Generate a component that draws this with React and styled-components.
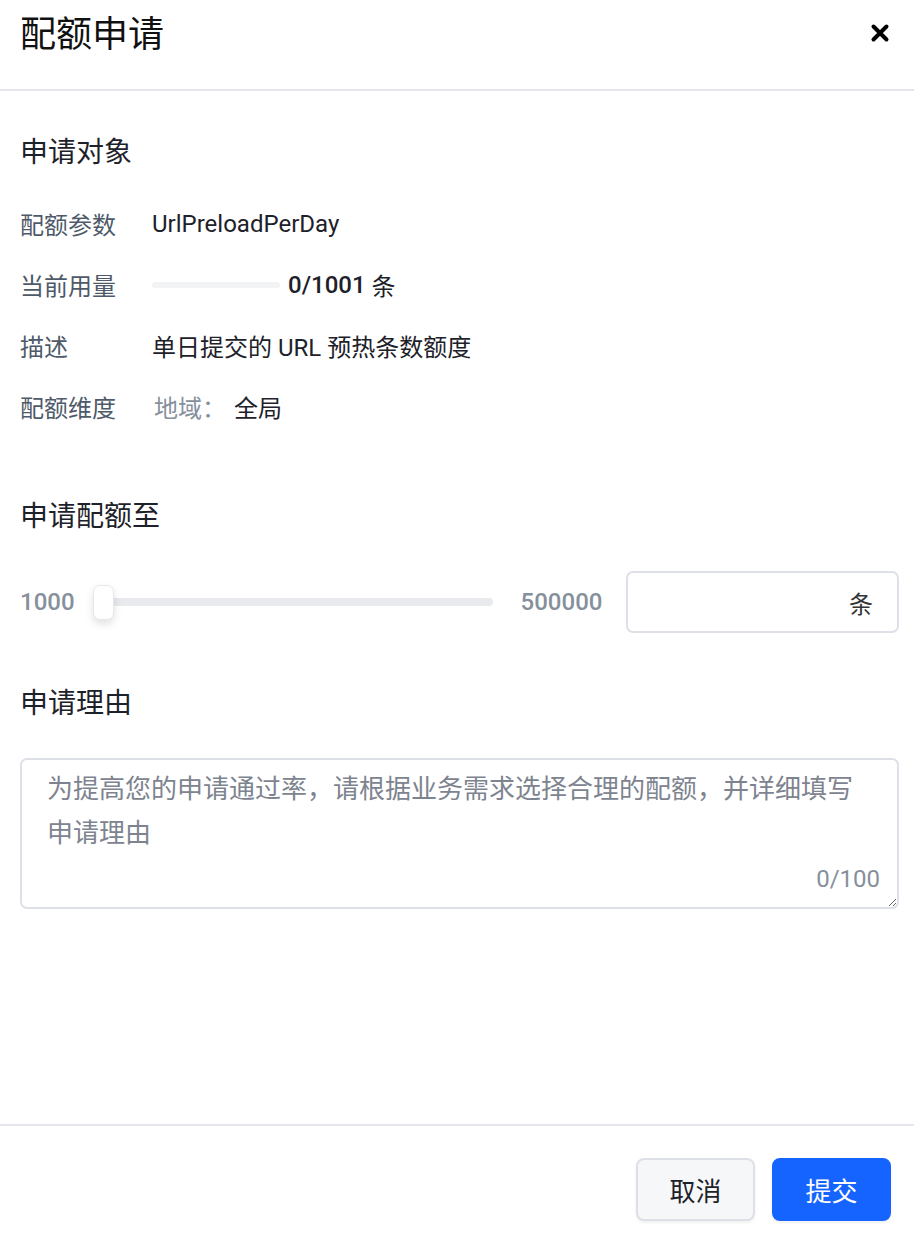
import React from 'react'
import styled, { createGlobalStyle } from 'styled-components'

const GlobalStyle = createGlobalStyle`
  html, body {
    margin: 0;
    padding: 0;
    background: #fff;
  }
  body {
    font-family: Roboto, "Noto Sans CJK SC", sans-serif;
    color: #1d2129;
  }
  * { box-sizing: border-box; }
`

const rows = [
  { label: '配额参数', value: 'UrlPreloadPerDay' },
  { label: '当前用量', usage: true },
  { label: '描述', value: '单日提交的 URL 预热条数额度' },
  { label: '配额维度', dim: { key: '地域：', value: '全局' } },
]

function App() {
  return (
    <Page>
      <GlobalStyle />
      <Header>
        <Title>配额申请</Title>
        <Close aria-label="close">
          <svg width="20" height="20" viewBox="0 0 20 20">
            <path d="M3.5 3.5 L16.5 16.5 M16.5 3.5 L3.5 16.5" stroke="#000" strokeWidth="4" strokeLinecap="round" />
          </svg>
        </Close>
      </Header>

      <Body>
        <SectionTitle $top={42}>申请对象</SectionTitle>
        <InfoList>
          {rows.map((r) => (
            <InfoRow key={r.label}>
              <Label>{r.label}</Label>
              {r.value && <Value>{r.value}</Value>}
              {r.usage && (
                <Value>
                  <UsageBar />
                  <Strong>0/1001</Strong>&nbsp;条
                </Value>
              )}
              {r.dim && (
                <Value>
                  <DimKey>{r.dim.key}</DimKey>
                  {r.dim.value}
                </Value>
              )}
            </InfoRow>
          ))}
        </InfoList>

        <SectionTitle $top={60}>申请配额至</SectionTitle>
        <SliderRow>
          <Bound>1000</Bound>
          <Track>
            <Thumb />
          </Track>
          <Bound $right>500000</Bound>
          <AmountBox>
            <AmountInput />
            <Unit>条</Unit>
          </AmountBox>
        </SliderRow>

        <SectionTitle $top={51}>申请理由</SectionTitle>
        <ReasonWrap>
          <Reason placeholder="为提高您的申请通过率，请根据业务需求选择合理的配额，并详细填写申请理由" />
          <Counter>0/100</Counter>
        </ReasonWrap>
      </Body>

      <Footer>
        <Button>取消</Button>
        <Button $primary>提交</Button>
      </Footer>
    </Page>
  )
}

export default App

const Page = styled.div`
  display: flex;
  flex-direction: column;
  min-height: 100vh;
`
const Header = styled.div`
  height: 91px;
  padding: 12px 24px 0 20px;
  display: flex;
  justify-content: space-between;
  align-items: flex-start;
  border-bottom: 2px solid #e5e6eb;
`
const Title = styled.h1`
  margin: 0;
  font-size: 36px;
  font-weight: 400;
  line-height: 46px;
  color: #111;
`
const Close = styled.button`
  border: 0;
  background: none;
  padding: 0;
  margin-top: 11px;
  width: 20px;
  height: 20px;
  cursor: pointer;
  display: flex;
`
const Body = styled.div`
  flex: 1;
  padding: 0 15px 0 20px;
`
const SectionTitle = styled.h2`
  margin: ${(p) => p.$top}px 0 0;
  font-size: 28px;
  font-weight: 400;
  line-height: 40px;
  color: #1d2129;
`
const InfoList = styled.div`
  margin-top: 20px;
  display: flex;
  flex-direction: column;
`
const InfoRow = styled.div`
  height: 61px;
  display: flex;
  align-items: center;
  font-size: 24px;
`
const Label = styled.div`
  width: 132px;
  color: #4e5969;
`
const Value = styled.div`
  display: flex;
  align-items: center;
  color: #1d2129;
`
const UsageBar = styled.div`
  width: 128px;
  height: 6px;
  border-radius: 3px;
  background: #f2f3f5;
  margin-right: 8px;
`
const Strong = styled.span`
  font-weight: 500;
`
const DimKey = styled.span`
  color: #86909c;
  margin: 0 8px 0 2px;
`
const SliderRow = styled.div`
  margin-top: 34px;
  height: 62px;
  display: flex;
  align-items: center;
`
const Bound = styled.div`
  flex-shrink: 0;
  font-size: 24px;
  font-weight: 500;
  color: #86909c;
  margin: ${(p) => (p.$right ? '0 24px 0 28px' : '0 21px 0 0')};
`
const Track = styled.div`
  position: relative;
  flex-shrink: 0;
  width: 397px;
  height: 8px;
  border-radius: 4px;
  background: #e8eaee;
`
const Thumb = styled.div`
  position: absolute;
  left: -3px;
  top: -13px;
  width: 21px;
  height: 35px;
  border-radius: 7px;
  background: #fff;
  border: 1px solid #e5e8ed;
  box-shadow: 0 4px 8px rgba(0, 0, 0, 0.12);
`
const AmountBox = styled.div`
  flex: 1;
  min-width: 0;
  height: 62px;
  border: 2px solid #dde1e7;
  border-radius: 7px;
  display: flex;
  align-items: center;
  padding: 0 24px 0 16px;
`
const AmountInput = styled.input`
  flex: 1;
  min-width: 0;
  border: 0;
  outline: none;
  font-size: 24px;
  font-family: inherit;
  background: transparent;
`
const Unit = styled.span`
  font-size: 24px;
  color: #333;
`
const ReasonWrap = styled.div`
  position: relative;
  margin-top: 34px;
`
const Reason = styled.textarea`
  display: block;
  width: 100%;
  height: 151px;
  border: 2px solid #dde1e7;
  border-radius: 7px;
  padding: 7px 25px;
  font-family: Roboto, "Noto Sans CJK SC", sans-serif;
  font-size: 26px;
  line-height: 44px;
  color: #1d2129;
  resize: vertical;
  outline: none;
  &::placeholder {
    color: #7d838f;
  }
`
const Counter = styled.span`
  position: absolute;
  right: 19px;
  bottom: 16px;
  font-size: 24px;
  color: #86909c;
`
const Footer = styled.div`
  border-top: 2px solid #e5e6eb;
  padding: 32px 23px 15px;
  display: flex;
  justify-content: flex-end;
  gap: 17px;
`
const Button = styled.button`
  width: 119px;
  height: 63px;
  border-radius: 8px;
  font-family: Roboto, "Noto Sans CJK SC", sans-serif;
  font-size: 26px;
  cursor: pointer;
  border: 2px solid ${(p) => (p.$primary ? '#1664ff' : '#dde1e7')};
  background: ${(p) => (p.$primary ? '#1664ff' : '#f6f7f9')};
  color: ${(p) => (p.$primary ? '#fff' : '#1d2129')};
  box-shadow: 0 2px 3px rgba(0, 0, 0, 0.06);
`
